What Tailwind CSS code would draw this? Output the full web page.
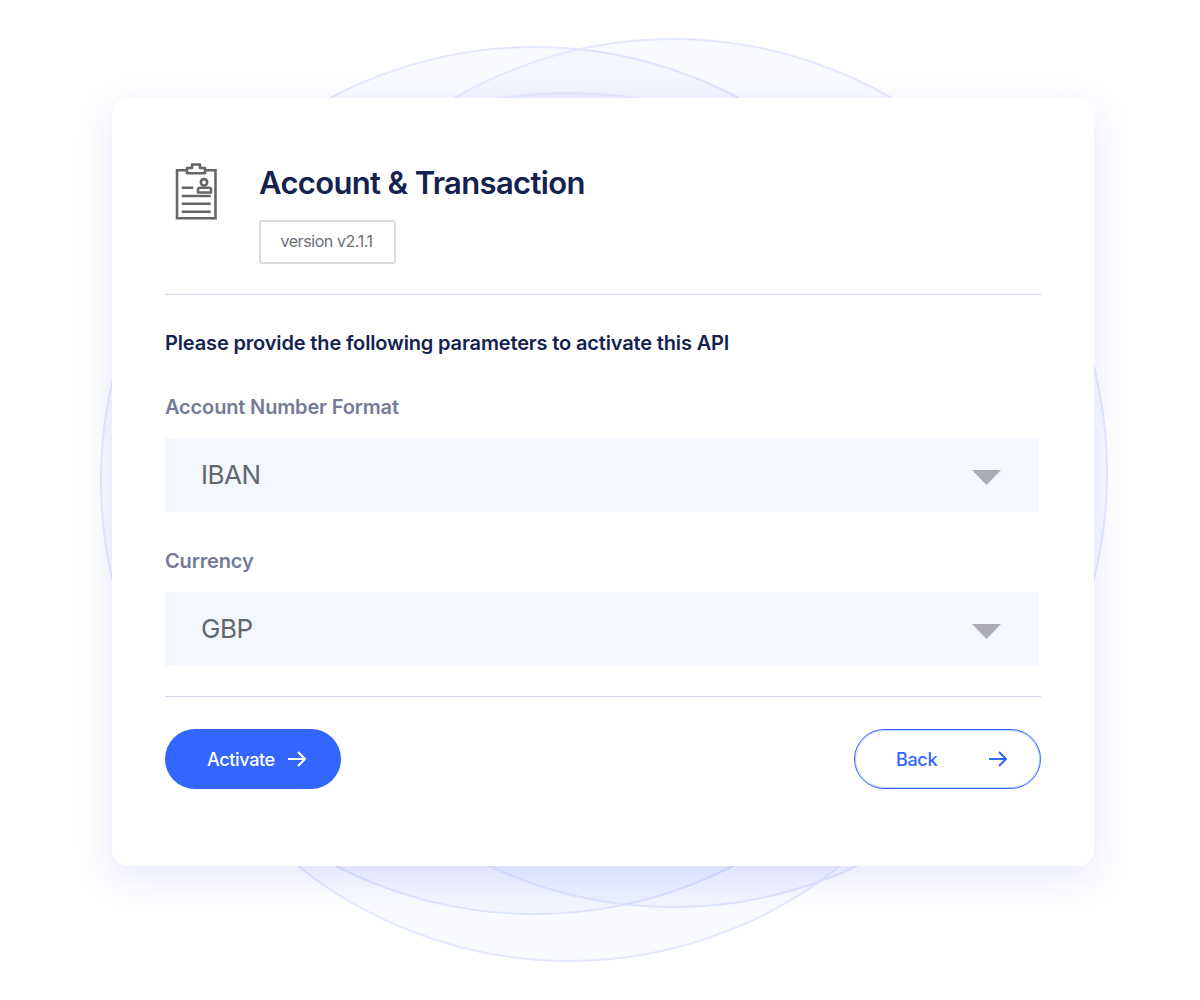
<!DOCTYPE html>
<html lang="en">
<head>
    <meta charset="UTF-8">
    <title>Account &amp; Transaction</title>
    <script src="https://cdn.jsdelivr.net/npm/@tailwindcss/browser@4"></script>
</head>
<body class="bg-white font-['Inter',sans-serif]">
    <div class="relative w-[1200px] h-[1000px] overflow-hidden bg-white">
        <!-- background circles -->
        <div class="absolute left-[100px] top-[46px] w-[869px] h-[869px] rounded-full border-2 border-[#e4e8fe] bg-[#4d6bff]/[0.03]"></div>
        <div class="absolute left-[238px] top-[38px] w-[870px] h-[870px] rounded-full border-2 border-[#e4e8fe] bg-[#4d6bff]/[0.03]"></div>
        <div class="absolute left-[134px] top-[92px] w-[870px] h-[870px] rounded-full border-2 border-[#e4e8fe] bg-[#4d6bff]/[0.03]"></div>

        <!-- card -->
        <div class="relative ml-[112px] mt-[98px] w-[982px] h-[768px] bg-white rounded-2xl shadow-[0_12px_36px_rgba(70,85,240,0.14)] pl-[53px] pr-[53px] pt-[65px]">
            <div class="flex items-start">
                <svg class="w-[42px] h-[58px] ml-[10px] shrink-0" viewBox="0 0 42 58" fill="none" stroke="#666666" stroke-width="2.6">
                    <path d="M12 7.3H2V55.3H40.5V7.3H30"/>
                    <path d="M12 10.3V5H17V1.5H25V5H30V10.3Z" stroke-linejoin="round"/>
                    <path d="M6.7 24.7H18.3M6.7 33H35.7M6.7 40.7H35.7M6.7 48.7H35.7"/>
                    <circle cx="29" cy="19.3" r="3.2"/>
                    <path d="M23 29.5V26.5Q23 24.7 25 24.7H34Q36 24.7 36 26.5V29.5Z" stroke-linejoin="round"/>
                </svg>
                <div class="ml-[42px]">
                    <h1 class="text-[31px] leading-[40px] font-semibold tracking-[-0.65px] text-[#15224f]">Account &amp; Transaction</h1>
                    <div class="mt-[17px] w-[137px] h-[44px] flex items-center justify-center border-2 border-[#dcdcdc] rounded-[3px] text-[16px] tracking-[-0.42px] text-[#6b6e75] pb-[2px] pr-[2px]">version v2.1.1</div>
                </div>
            </div>
            <div class="mt-[30px] h-px bg-[#d3d4ea] w-[876px]"></div>
            <p class="mt-[35px] text-[20px] leading-[26px] font-semibold tracking-[-0.15px] text-[#15224f]">Please provide the following parameters to activate this API</p>
            <label class="block mt-[38px] text-[20px] leading-[26px] font-semibold tracking-[-0.15px] text-[#757b97]">Account Number Format</label>
            <div class="mt-[18px] w-[874px] h-[74px] bg-[#f4f7ff] flex items-center justify-between pl-[36px] pr-[38px]">
                <span class="text-[26px] tracking-[-0.5px] text-[#63666d] -mt-[2px]">IBAN</span>
                <svg class="w-[29px] h-[15px] mt-[5px]" viewBox="0 0 29 15"><path d="M0 0H29L14.5 15Z" fill="#aaaab8"/></svg>
            </div>
            <label class="block mt-[36px] text-[20px] leading-[26px] font-semibold tracking-[-0.15px] text-[#757b97]">Currency</label>
            <div class="mt-[18px] w-[874px] h-[74px] bg-[#f4f7ff] flex items-center justify-between pl-[36px] pr-[38px]">
                <span class="text-[26px] tracking-[-0.5px] text-[#63666d] -mt-[2px]">GBP</span>
                <svg class="w-[29px] h-[15px] mt-[5px]" viewBox="0 0 29 15"><path d="M0 0H29L14.5 15Z" fill="#aaaab8"/></svg>
            </div>
            <div class="mt-[30px] h-px bg-[#d3d4ea] w-[876px]"></div>
            <div class="mt-[32px] w-[876px] flex justify-between">
                <button class="w-[176px] h-[60px] rounded-full bg-[#3366ff] text-white text-[18px] font-medium tracking-[-0.35px] flex items-center pl-[42px]">
                    Activate
                    <svg class="w-[18px] h-[16px] ml-[13px]" viewBox="0 0 18 16" fill="none" stroke="currentColor" stroke-width="2"><path d="M0 8H17M10 1L17 8L10 15"/></svg>
                </button>
                <button class="w-[187px] h-[60px] rounded-full border border-[#3366ff] shadow-[inset_0_0_0_1px_rgba(51,102,255,0.3)] text-[#3366ff] text-[18px] font-medium tracking-[-0.35px] flex items-center pl-[41px]">
                    Back
                    <svg class="w-[18px] h-[16px] ml-[52px]" viewBox="0 0 18 16" fill="none" stroke="currentColor" stroke-width="2"><path d="M0 8H17M10 1L17 8L10 15"/></svg>
                </button>
            </div>
        </div>
    </div>
</body>
</html>
